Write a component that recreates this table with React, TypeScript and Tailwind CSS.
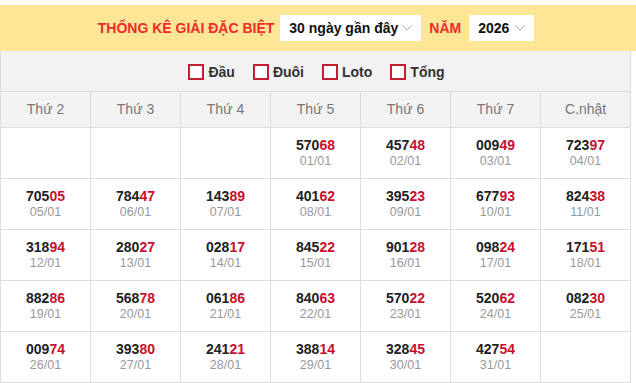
import React from 'react';

type Cell = { num: string; date: string } | null;

const rows: Cell[][] = [
  [null, null, null,
    { num: '57068', date: '01/01' }, { num: '45748', date: '02/01' },
    { num: '00949', date: '03/01' }, { num: '72397', date: '04/01' }],
  [{ num: '70505', date: '05/01' }, { num: '78447', date: '06/01' }, { num: '14389', date: '07/01' },
    { num: '40162', date: '08/01' }, { num: '39523', date: '09/01' }, { num: '67793', date: '10/01' },
    { num: '82438', date: '11/01' }],
  [{ num: '31894', date: '12/01' }, { num: '28027', date: '13/01' }, { num: '02817', date: '14/01' },
    { num: '84522', date: '15/01' }, { num: '90128', date: '16/01' }, { num: '09824', date: '17/01' },
    { num: '17151', date: '18/01' }],
  [{ num: '88286', date: '19/01' }, { num: '56878', date: '20/01' }, { num: '06186', date: '21/01' },
    { num: '84063', date: '22/01' }, { num: '57022', date: '23/01' }, { num: '52062', date: '24/01' },
    { num: '08230', date: '25/01' }],
  [{ num: '00974', date: '26/01' }, { num: '39380', date: '27/01' }, { num: '24121', date: '28/01' },
    { num: '38814', date: '29/01' }, { num: '32845', date: '30/01' }, { num: '42754', date: '31/01' },
    null],
];

const days = ['Thứ 2', 'Thứ 3', 'Thứ 4', 'Thứ 5', 'Thứ 6', 'Thứ 7', 'C.nhật'];
const filters = ['Đầu', 'Đuôi', 'Loto', 'Tổng'];

function Chevron() {
  return (
    <svg width="12" height="8" viewBox="0 0 12 8" className="text-[#aaa]">
      <path d="M1.5 1.5 L6 6 L10.5 1.5" fill="none" stroke="currentColor" strokeWidth="1" />
    </svg>
  );
}

function Select({ label, className }: { label: string; className: string }) {
  return (
    <div className={`flex items-center justify-between h-[26px] bg-white pl-[9px] pr-[8px] ${className}`}>
      <span className="text-[14px] font-bold text-[#111]">{label}</span>
      <Chevron />
    </div>
  );
}

export default function App() {
  return (
    <div className="w-[636px] pt-[5px] bg-white font-['Liberation_Sans',Arial,sans-serif]">
      {/* tiêu đề */}
      <div className="h-[46px] bg-[#ffe596] w-[636px] pl-[1px]">
        <div className="w-[630px] h-full flex items-center justify-center gap-[6px]">
          <span className="text-[14px] font-bold text-[#ed2a2a]">THỐNG KÊ GIẢI ĐẶC BIỆT</span>
          <Select label="30 ngày gần đây" className="w-[141px]" />
          <span className="text-[14px] font-bold text-[#ed2a2a] mx-[2px]">NĂM</span>
          <Select label="2026" className="w-[65px]" />
        </div>
      </div>

      <table className="w-[631px] table-fixed border-collapse">
        <thead>
          <tr>
            <td colSpan={7} className="h-[40px] bg-[#f2f2f2] border border-t-0 border-[#dddddd] p-0">
              <div className="flex items-center justify-center gap-[18px] pl-[2px] pt-[3px]">
                {filters.map((f) => (
                  <label key={f} className="flex items-center gap-[4px]">
                    <span className="w-[16px] h-[16px] border-2 border-[#c21f30] bg-white" />
                    <span className="text-[14px] font-bold text-[#333]">{f}</span>
                  </label>
                ))}
              </div>
            </td>
          </tr>
          <tr>
            {days.map((d) => (
              <th key={d} className="h-[36px] bg-[#f2f2f2] border border-[#dddddd] text-[14px] font-normal text-[#777] p-0">
                {d}
              </th>
            ))}
          </tr>
        </thead>
        <tbody>
          {rows.map((row, i) => (
            <tr key={i}>
              {row.map((c, j) => (
                <td key={j} className="h-[51px] border border-[#dddddd] text-center p-0 align-middle">
                  {c && (
                    <div className="flex flex-col items-center pt-[1px]">
                      <span className="text-[14px] font-bold leading-[17px] text-[#222]">
                        {c.num.slice(0, 3)}
                        <span className="text-[#c8102e]">{c.num.slice(3)}</span>
                      </span>
                      <span className="text-[12.5px] leading-[15px] text-[#999]">{c.date}</span>
                    </div>
                  )}
                </td>
              ))}
            </tr>
          ))}
        </tbody>
      </table>
    </div>
  );
}
